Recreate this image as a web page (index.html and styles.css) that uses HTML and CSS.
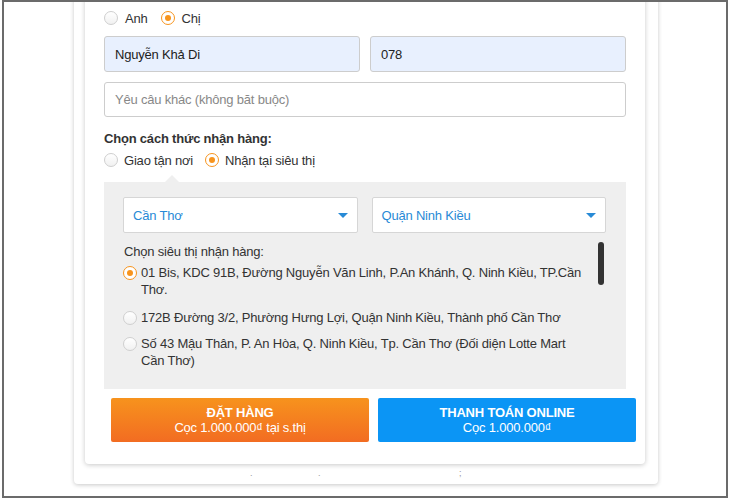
FILE: index.html
```html
<!DOCTYPE html>
<html lang="vi">
<head>
<meta charset="utf-8">
<title>Đặt hàng</title>
<link rel="stylesheet" href="styles.css">
</head>
<body>
<div class="frame">
  <div class="back-layer">
    <div class="card">
      <div class="radio-row gender">
        <label class="opt"><span class="radio"></span>Anh</label>
        <label class="opt"><span class="radio checked"></span>Chị</label>
      </div>
      <div class="input-row">
        <div class="input filled">Nguyễn Khả Di</div>
        <div class="input filled">078</div>
      </div>
      <div class="input placeholder">Yêu câu khác (không băt buộc)</div>
      <div class="heading">Chọn cách thức nhận hàng:</div>
      <div class="radio-row delivery">
        <label class="opt"><span class="radio"></span>Giao tận nơi</label>
        <label class="opt"><span class="radio checked"></span>Nhận tại siêu thị</label>
      </div>
      <div class="store-box">
        <span class="notch"></span>
        <div class="select-row">
          <div class="select">Cần Thơ<span class="caret"></span></div>
          <div class="select">Quận Ninh Kiều<span class="caret"></span></div>
        </div>
        <div class="store-list">
          <span class="scroll-thumb"></span>
          <div class="list-title">Chọn siêu thị nhận hàng:</div>
          <label class="store"><span class="radio checked"></span><span class="addr">01 Bis, KDC 91B, Đường Nguyễn Văn Linh, P.An Khánh, Q. Ninh Kiều, TP.Cần Thơ.</span></label>
          <label class="store"><span class="radio"></span><span class="addr">172B Đường 3/2, Phường Hưng Lợi, Quận Ninh Kiều, Thành phố Cần Thơ</span></label>
          <label class="store"><span class="radio"></span><span class="addr">Số 43 Mậu Thân, P. An Hòa, Q. Ninh Kiều, Tp. Cần Thơ (Đối diện Lotte Mart Cần Thơ)</span></label>
        </div>
      </div>
      <div class="btn-row">
        <button class="btn orange"><b>ĐẶT HÀNG</b><span>Cọc 1.000.000₫ tại s.thị</span></button>
        <button class="btn blue"><b>THANH TOÁN ONLINE</b><span>Cọc 1.000.000₫</span></button>
      </div>
    </div>
    <div class="under-row"><span>.</span><span>.</span><span>;</span></div>
  </div>
</div>
</body>
</html>
```
FILE: styles.css
```css
* { box-sizing: border-box; }
html, body { margin: 0; padding: 0; background: #fff; }
body { font-family: "Liberation Sans", Arial, sans-serif; color: #333; font-size: 13px; letter-spacing: -0.2px; }

.frame {
  width: 726px;
  height: 498px;
  margin-left: 2px;
  border: 2px solid #6b6b6b;
  overflow: hidden;
  background: #fff;
}

.back-layer {
  position: relative;
  width: 584px;
  margin-left: 70px;
  margin-top: -40px;
  padding-bottom: 20px;
  background: #fff;
  border-radius: 4px;
  box-shadow: 0 1px 4px rgba(0,0,0,0.22);
}

.card {
  width: 560px;
  margin-left: 11px;
  padding: 49px 19px 22px;
  background: #fff;
  border-radius: 4px;
  box-shadow: 0 1px 5px rgba(0,0,0,0.22);
}

.radio-row { display: flex; align-items: center; height: 14px; }
.opt { display: flex; align-items: center; font-size: 13px; color: #333; }
.gender .opt { margin-right: 13px; }
.gender .opt .radio { margin-right: 7px; }
.delivery { margin-top: 5px; height: 16px; }
.delivery .opt { margin-right: 12px; }
.delivery .opt .radio { margin-right: 6px; }

.radio {
  position: relative;
  display: inline-block;
  flex: none;
  width: 14px;
  height: 14px;
  border-radius: 50%;
  border: 1px solid #cfcfcf;
  background: linear-gradient(#fff, #f1f1f1);
}
.radio.checked { border-color: #f7941d; background: #fff; }
.radio.checked::after {
  content: "";
  position: absolute;
  left: 3px; top: 3px;
  width: 6px; height: 6px;
  border-radius: 50%;
  background: #f7941d;
}

.input-row { display: flex; gap: 10px; margin-top: 11px; }
.input {
  flex: 1;
  height: 36px;
  display: flex;
  align-items: center;
  padding-left: 10px;
  border: 1px solid #cdcdcd;
  border-radius: 3px;
  font-size: 13px;
}
.input.filled { background: #e8f0fe; color: #222; }
.input.placeholder { margin-top: 10px; background: #fff; color: #888; height: 35px; }

.heading { margin-top: 13px; font-size: 13px; font-weight: bold; color: #333; line-height: 17px; }

.store-box {
  position: relative;
  margin-top: 14px;
  background: #efefef;
  padding: 15px 20px 20px 19px;
}
.notch {
  position: absolute;
  top: -7px;
  left: 61px;
  width: 0; height: 0;
  border-left: 7px solid transparent;
  border-right: 7px solid transparent;
  border-bottom: 7px solid #efefef;
}

.select-row { display: flex; gap: 14px; }
.select {
  position: relative;
  flex: 1;
  height: 36px;
  display: flex;
  align-items: center;
  padding-left: 9px;
  background: #fff;
  border: 1px solid #d6d6d6;
  border-radius: 2px;
  color: #288ad6;
  font-size: 13px;
}
.caret {
  position: absolute;
  right: 9px;
  top: 15px;
  width: 0; height: 0;
  border-left: 5px solid transparent;
  border-right: 5px solid transparent;
  border-top: 5px solid #288ad6;
}

.store-list { position: relative; padding-top: 10px; padding-right: 14px; }
.scroll-thumb {
  position: absolute;
  right: 2px;
  top: 9px;
  width: 6px;
  height: 43px;
  border-radius: 3px;
  background: #333;
}
.list-title { font-size: 13px; line-height: 17px; color: #333; padding-left: 1px; }
.store { display: flex; align-items: flex-start; margin-top: 4px; font-size: 13px; line-height: 17px; color: #333; }
.store + .store { margin-top: 11px; }
.store + .store + .store { margin-top: 9px; }
.store .radio { margin-top: 2px; margin-right: 4px; }
.addr { flex: 1; padding-right: 10px; }

.btn-row { display: flex; gap: 9px; margin: 9px -10px 0 7px; }
.btn {
  flex: 1;
  height: 44px;
  border: 0;
  border-radius: 2px;
  color: #fff;
  font-family: "Liberation Sans", Arial, sans-serif;
  font-size: 13px;
  letter-spacing: -0.2px;
  display: flex;
  flex-direction: column;
  align-items: center;
  justify-content: center;
  padding: 0;
  line-height: 15px;
}
.btn b { font-size: 13px; }
.btn.orange { background: linear-gradient(#f7931d, #f26c22); }
.btn.blue { background: #0b95f5; }

.under-row {
  position: absolute;
  left: 0; right: 0; bottom: 2px;
  height: 14px;
  font-size: 9px;
  color: #999;
}
.under-row span { position: absolute; top: 0; }
.under-row span:nth-child(1) { left: 176px; }
.under-row span:nth-child(2) { left: 244px; }
.under-row span:nth-child(3) { left: 385px; }
```
